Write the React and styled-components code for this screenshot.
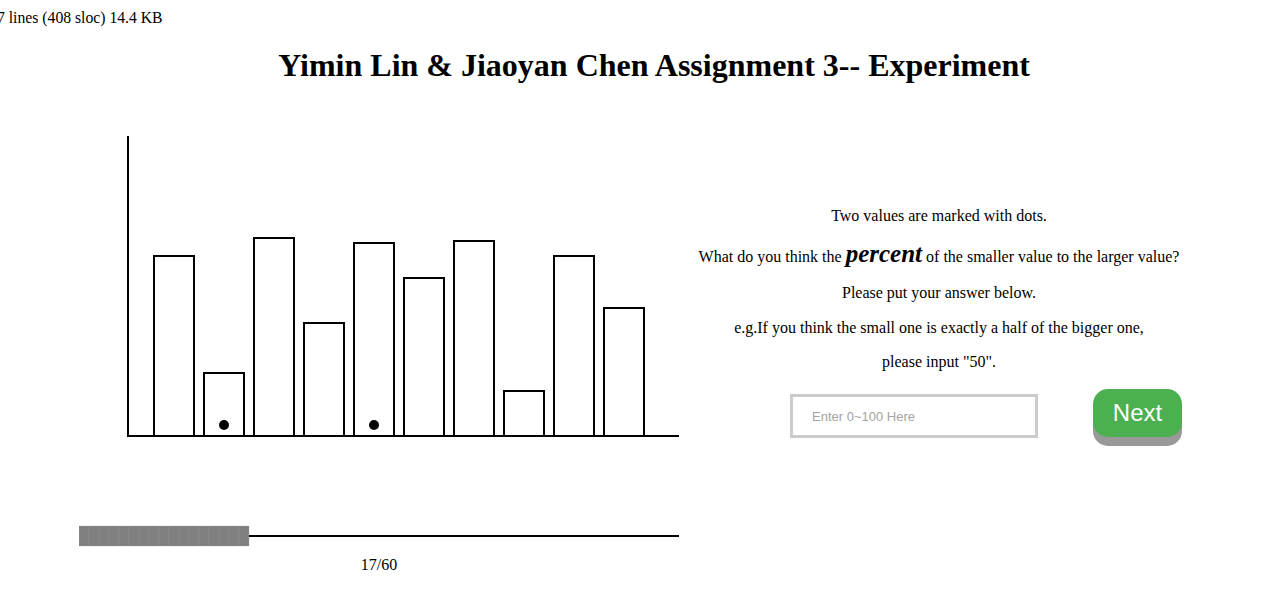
import React from "react";
import styled, { createGlobalStyle } from "styled-components";

const GlobalStyle = createGlobalStyle`
  html, body { margin: 0; padding: 0; background: #fff; }
  body {
    font-family: "Liberation Serif", "Times New Roman", serif;
    color: #000;
    width: 1272px;
    overflow: hidden;
  }
`;

const Page = styled.div`
  width: 1272px;
  height: 615px;
  overflow: hidden;
`;

const FileInfo = styled.div`
  font-size: 15.7px;
  line-height: 18px;
  padding-top: 9px;
  margin-left: -3px;
  white-space: nowrap;
`;

const Title = styled.h1`
  font-size: 32px;
  font-weight: bold;
  line-height: 37px;
  margin: 20px 0 0;
  padding-left: 36px;
  text-align: center;
`;

const Main = styled.div`
  display: flex;
  padding-left: 79px;
  margin-top: 36px;
`;

const LeftColumn = styled.div`
  width: 600px;
  display: flex;
  flex-direction: column;
`;

const ChartSvg = styled.svg`
  display: block;
  width: 600px;
  height: 330px;
`;

const ProgressSvg = styled.svg`
  display: block;
  width: 600px;
  height: 40px;
  margin-top: 65px;
`;

const Counter = styled.div`
  text-align: center;
  font-size: 16px;
  line-height: 18px;
  margin-top: 1px;
`;

const RightColumn = styled.div`
  width: 500px;
  margin-left: 10px;
  padding-top: 87px;
  text-align: center;
`;

const Line = styled.p`
  font-size: 16px;
  line-height: 18px;
  margin: 0 0 ${(p) => p.$gap}px;
  white-space: nowrap;
`;

const Emph = styled.span`
  font-size: 25px;
  font-weight: bold;
  font-style: italic;
`;

const AnswerRow = styled.div`
  display: flex;
  align-items: flex-start;
  padding-left: 101px;
  margin-top: 18px;
`;

const AnswerInput = styled.input`
  box-sizing: border-box;
  width: 248px;
  height: 44px;
  margin-top: 5px;
  border: 3px solid #ccc;
  padding: 0 0 0 19px;
  font-family: "Liberation Sans", Arial, sans-serif;
  font-size: 13px;
  outline: none;
  &::placeholder { color: #a4a4a4; }
`;

const NextButton = styled.button`
  box-sizing: border-box;
  margin-left: 55px;
  width: 89px;
  height: 48px;
  border: none;
  border-radius: 15px;
  background: #4caf50;
  color: #fff;
  font-family: "Liberation Sans", Arial, sans-serif;
  font-size: 24px;
  padding: 0;
  box-shadow: 0 9px #999;
  cursor: pointer;
`;

const bars = [
  { top: 256, dot: false },
  { top: 373, dot: true },
  { top: 238, dot: false },
  { top: 323, dot: false },
  { top: 243, dot: true },
  { top: 278, dot: false },
  { top: 241, dot: false },
  { top: 391, dot: false },
  { top: 256, dot: false },
  { top: 308, dot: false },
];

const OFFSET_Y = 120;
const BASE = 316;

function BarChart() {
  return (
    <ChartSvg viewBox="0 0 600 330">
      <line x1="49" y1="16" x2="49" y2={BASE + 1} stroke="#000" strokeWidth="2" />
      <line x1="48" y1={BASE} x2="600" y2={BASE} stroke="#000" strokeWidth="2" />
      {bars.map((b, i) => {
        const x = 75 + i * 50;
        const y = b.top - OFFSET_Y;
        return (
          <g key={i}>
            <rect x={x} y={y} width="40" height={BASE - y} fill="#fff" stroke="#000" strokeWidth="2" />
            {b.dot && <circle cx={x + 20} cy={BASE - 11} r="5" fill="#000" />}
          </g>
        );
      })}
    </ChartSvg>
  );
}

function Progress({ done }) {
  const cells = Array.from({ length: done });
  const end = done * 10;
  return (
    <ProgressSvg viewBox="0 0 600 40">
      {cells.map((_, i) => (
        <rect key={i} x={i * 10} y="11" width="10" height="20" fill="#808080" stroke="#9a9a9a" strokeWidth="0.3" />
      ))}
      <line x1={end} y1="21" x2="600" y2="21" stroke="#000" strokeWidth="2" />
    </ProgressSvg>
  );
}

export default function App() {
  return (
    <Page>
      <GlobalStyle />
      <FileInfo>7 lines (408 sloc) 14.4 KB</FileInfo>
      <Title>Yimin Lin &amp; Jiaoyan Chen Assignment 3-- Experiment</Title>
      <Main>
        <LeftColumn>
          <BarChart />
          <Progress done={17} />
          <Counter>17/60</Counter>
        </LeftColumn>
        <RightColumn>
          <Line $gap={20}>Two values are marked with dots.</Line>
          <Line $gap={18}>
            What do you think the <Emph>percent</Emph> of the smaller value to the larger value?
          </Line>
          <Line $gap={17}>Please put your answer below.</Line>
          <Line $gap={16}>e.g.If you think the small one is exactly a half of the bigger one,</Line>
          <Line $gap={0}>please input "50".</Line>
          <AnswerRow>
            <AnswerInput placeholder="Enter 0~100 Here" />
            <NextButton>Next</NextButton>
          </AnswerRow>
        </RightColumn>
      </Main>
    </Page>
  );
}
